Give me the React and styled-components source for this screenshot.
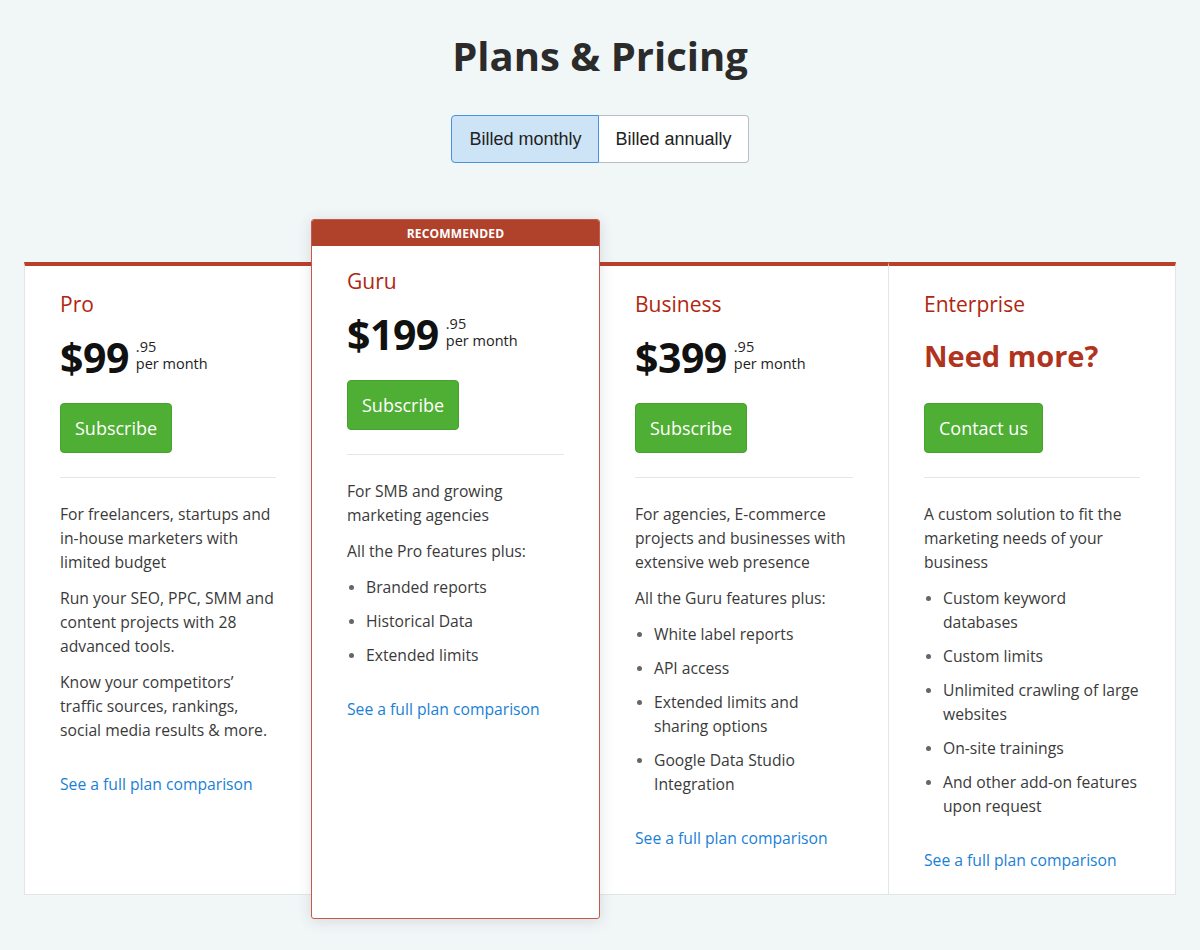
import React from 'react';
import styled, { createGlobalStyle } from 'styled-components';

const GlobalStyle = createGlobalStyle`
  html, body {
    margin: 0;
    padding: 0;
    background: #f1f6f7;
  }
  body {
    font-family: 'Open Sans', 'Noto Sans', sans-serif;
    color: #333;
  }
`;

const Page = styled.div`
  width: 1200px;
  height: 950px;
  box-sizing: border-box;
  padding: 28px 24px 0;
  display: flex;
  flex-direction: column;
  align-items: center;
`;

const Heading = styled.h1`
  margin: 0;
  font-size: 40px;
  line-height: 56px;
  font-weight: 700;
  color: #2b2b2b;
`;

const Toggle = styled.div`
  margin-top: 31px;
  display: flex;
`;

const ToggleButton = styled.button`
  height: 48px;
  padding: 0 ${p => (p.active ? '17px' : '16px')};
  font-family: 'Liberation Sans', Arial, sans-serif;
  font-size: 18px;
  color: #222;
  cursor: pointer;
  background: ${p => (p.active ? '#cde4f7' : '#fff')};
  border: 1px solid ${p => (p.active ? '#4a93dc' : '#b9bec2')};
  border-left-width: ${p => (p.active ? '1px' : '0')};
  border-radius: ${p => (p.active ? '4px 0 0 4px' : '0 4px 4px 0')};
`;

const Plans = styled.div`
  margin-top: 99px;
  width: 100%;
  display: grid;
  grid-template-columns: 287px 289px 288px 288px;
  align-items: stretch;
`;

const Card = styled.div`
  background: #fff;
  border-top: 4px solid #b8402a;
  border-bottom: 1px solid #e2e6e8;
  border-left: ${p => (p.first || p.divided ? '1px solid #e2e6e8' : '0')};
  border-right: ${p => (p.last ? '1px solid #e2e6e8' : '0')};
  padding: 22px 35px 30px;
  height: 633px;
  box-sizing: border-box;
  display: flex;
  flex-direction: column;

  & > * {
    flex-shrink: 0;
  }
`;

const Featured = styled.div`
  margin-top: -43px;
  margin-bottom: -24px;
  position: relative;
  z-index: 2;
  background: #fff;
  border: 1px solid #c9574a;
  border-radius: 3px;
  box-shadow: 0 2px 14px rgba(60, 80, 100, 0.16);
  display: flex;
  flex-direction: column;
  overflow: hidden;
`;

const Ribbon = styled.div`
  height: 26px;
  background: #b0412b;
  color: #fff;
  font-size: 12px;
  font-weight: 700;
  display: flex;
  align-items: center;
  justify-content: center;
  letter-spacing: 0.2px;
`;

const FeaturedBody = styled.div`
  padding: 19px 35px 30px;
  display: flex;
  flex-direction: column;

  & > * {
    flex-shrink: 0;
  }
`;

const PlanName = styled.div`
  font-size: 21px;
  line-height: 32px;
  color: #b0260f;
`;

const PriceRow = styled.div`
  margin-top: 16px;
  display: flex;
  align-items: center;
  height: 42px;
`;

const Amount = styled.span`
  font-size: 41px;
  font-weight: 700;
  color: #111;
  letter-spacing: -0.5px;
  line-height: 42px;
`;

const Cents = styled.span`
  margin-left: 7px;
  display: flex;
  flex-direction: column;
  font-size: 14.5px;
  line-height: 17px;
  color: #222;
  margin-top: -4px;
`;

const NeedMore = styled.div`
  margin-top: 14px;
  height: 42px;
  display: flex;
  align-items: center;
  font-size: 29px;
  font-weight: 700;
  color: #b0341d;
`;

const Action = styled.button`
  margin-top: ${p => (p.contact ? '27px' : '25px')};
  align-self: flex-start;
  height: 50px;
  padding: 0 14px;
  border: 1px solid #46a32c;
  border-radius: 4px;
  background: #4fae34;
  color: #fff;
  font-family: inherit;
  font-size: 18px;
  font-weight: 500;
  cursor: pointer;
`;

const Rule = styled.hr`
  margin: 24px 0 24px;
  border: 0;
  border-top: 1px solid #e4e6e8;
  width: 100%;
`;

const Details = styled.div`
  display: flex;
  flex-direction: column;
  gap: 12px;
  font-size: 15.7px;
  line-height: 24px;
  color: #3a3a3a;
`;

const Text = styled.p`
  margin: 0;
`;

const Bullets = styled.ul`
  margin: 0;
  padding: 0;
  list-style: none;
  display: flex;
  flex-direction: column;
  gap: 10px;
`;

const Bullet = styled.li`
  position: relative;
  padding-left: 19px;

  &::before {
    content: '';
    position: absolute;
    left: 2px;
    top: 10px;
    width: 5px;
    height: 5px;
    border-radius: 50%;
    background: #666;
  }
`;

const Compare = styled.a`
  margin-top: 30px;
  font-size: 15.7px;
  line-height: 24px;
  color: #1a7fd6;
  text-decoration: none;
  cursor: pointer;
`;

const plans = [
  {
    name: 'Pro',
    price: '$99',
    action: 'Subscribe',
    text: [
      'For freelancers, startups and in-house marketers with limited budget',
      'Run your SEO, PPC, SMM and content projects with 28 advanced tools.',
      'Know your competitors\u2019 traffic sources, rankings, social media results & more.',
    ],
  },
  {
    name: 'Guru',
    price: '$199',
    action: 'Subscribe',
    featured: true,
    text: ['For SMB and growing marketing agencies', 'All the Pro features plus:'],
    items: ['Branded reports', 'Historical Data', 'Extended limits'],
  },
  {
    name: 'Business',
    price: '$399',
    action: 'Subscribe',
    text: [
      'For agencies, E-commerce projects and businesses with extensive web presence',
      'All the Guru features plus:',
    ],
    items: [
      'White label reports',
      'API access',
      'Extended limits and sharing options',
      'Google Data Studio Integration',
    ],
  },
  {
    name: 'Enterprise',
    action: 'Contact us',
    text: ['A custom solution to fit the marketing needs of your business'],
    items: [
      'Custom keyword databases',
      'Custom limits',
      'Unlimited crawling of large websites',
      'On-site trainings',
      'And other add-on features upon request',
    ],
  },
];

const PlanContent = ({ plan }) => (
  <>
    <PlanName>{plan.name}</PlanName>
    {plan.price ? (
      <PriceRow>
        <Amount>{plan.price}</Amount>
        <Cents>
          <span>.95</span>
          <span>per month</span>
        </Cents>
      </PriceRow>
    ) : (
      <NeedMore>Need more?</NeedMore>
    )}
    <Action contact={!plan.price}>{plan.action}</Action>
    <Rule />
    <Details>
      {plan.text.map(t => (
        <Text key={t}>{t}</Text>
      ))}
      {plan.items && (
        <Bullets>
          {plan.items.map(i => (
            <Bullet key={i}>{i}</Bullet>
          ))}
        </Bullets>
      )}
    </Details>
    <Compare>See a full plan comparison</Compare>
  </>
);

const App = () => (
  <>
    <GlobalStyle />
    <Page>
      <Heading>Plans &amp; Pricing</Heading>
      <Toggle>
        <ToggleButton active>Billed monthly</ToggleButton>
        <ToggleButton>Billed annually</ToggleButton>
      </Toggle>
      <Plans>
        {plans.map((plan, i) =>
          plan.featured ? (
            <Featured key={plan.name}>
              <Ribbon>RECOMMENDED</Ribbon>
              <FeaturedBody>
                <PlanContent plan={plan} />
              </FeaturedBody>
            </Featured>
          ) : (
            <Card key={plan.name} first={i === 0} last={i === plans.length - 1} divided={i === 3}>
              <PlanContent plan={plan} />
            </Card>
          )
        )}
      </Plans>
    </Page>
  </>
);

export default App;
